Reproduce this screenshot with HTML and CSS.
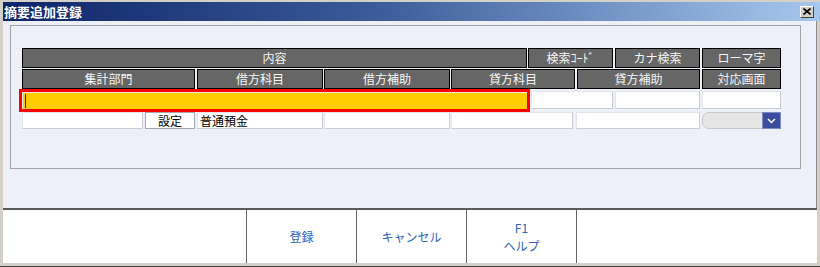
FILE: index.html
```html
<!DOCTYPE html>
<html lang="ja">
<head>
  <meta charset="UTF-8">
  <title>摘要追加登録</title>
  <link rel="stylesheet" href="styles.css">
</head>
<body>
  <div class="window">
    <div class="titlebar">
      <span class="title">摘要追加登録</span>
      <span class="close">
        <svg width="8" height="7" viewBox="0 0 8 7">
          <path d="M0.5 0.5 L7.5 6.5 M7.5 0.5 L0.5 6.5" stroke="#000" stroke-width="1.6"/>
        </svg>
      </span>
    </div>

    <div class="client">
      <div class="panel">
        <div class="row head">
          <div class="hcell w505">内容</div>
          <div class="hcell w85 g1">検索ｺｰﾄﾞ</div>
          <div class="hcell w85 g2">カナ検索</div>
          <div class="hcell w79 g2">ローマ字</div>
        </div>
        <div class="row head second">
          <div class="hcell w173">集計部門</div>
          <div class="hcell w126 g2">借方科目</div>
          <div class="hcell w126 g1">借方補助</div>
          <div class="hcell w124 g1">貸方科目</div>
          <div class="hcell w123 g2">貸方補助</div>
          <div class="hcell w79 g2">対応画面</div>
        </div>
        <div class="row input-row">
          <div class="active w505"><span class="caret"></span></div>
          <div class="cell w82 g4"></div>
          <div class="cell w85 g2"></div>
          <div class="cell w79 g2"></div>
        </div>
        <div class="row data-row">
          <div class="cell w121"></div>
          <div class="btn w50 g2">設定</div>
          <div class="cell w126 g2">普通預金</div>
          <div class="cell w126 g1"></div>
          <div class="cell w122 g1"></div>
          <div class="cell w124 g3"></div>
          <div class="combo w79 g2">
            <span class="combo-arrow">
              <svg width="9" height="6" viewBox="0 0 9 6">
                <path d="M1 1 L4.5 4.5 L8 1" fill="none" stroke="#fff" stroke-width="1.5"/>
              </svg>
            </span>
          </div>
        </div>
      </div>
    </div>

    <div class="footer">
      <div class="fspace"></div>
      <div class="fbtn">登録</div>
      <div class="fbtn">キャンセル</div>
      <div class="fbtn">F1<br>ヘルプ</div>
      <div class="fbtn rest"></div>
    </div>
  </div>
</body>
</html>
```

FILE: styles.css
```css
* {
  margin: 0;
  padding: 0;
  box-sizing: border-box;
}
body {
  width: 820px;
  height: 267px;
  background: #d4d0c8;
  font-family: "Noto Sans CJK JP", "DejaVu Sans", sans-serif;
  font-size: 12px;
  overflow: hidden;
}
.window {
  height: 267px;
  padding-top: 2px;
  border-bottom: 1px solid #404040;
}
.titlebar {
  height: 19px;
  margin-left: 3px;
  display: flex;
  align-items: center;
  justify-content: space-between;
  background: linear-gradient(to right, #0c2468, #3a5a98 45%, #a6c8ee);
}
.title {
  color: #fff;
  font-weight: bold;
  font-size: 13px;
  padding-left: 1px;
  letter-spacing: 0;
}
.close {
  width: 14px;
  height: 12px;
  margin-right: 6px;
  background: #d4d0c8;
  border-top: 1px solid #fff;
  border-left: 1px solid #fff;
  border-right: 1px solid #404040;
  border-bottom: 1px solid #404040;
  display: flex;
  align-items: center;
  justify-content: center;
}
.client {
  height: 187px;
  margin: 0 3px 0 3px;
  background: #edf0f8;
  border-right: 1px solid #8a8a8a;
  padding: 4px 0 0 7px;
}
.panel {
  width: 791px;
  height: 144px;
  border: 1px solid #a4a4a4;
  padding: 22px 0 0 11px;
}
.row {
  display: flex;
}
.head {
  height: 20px;
}
.second {
  margin-top: 1px;
}
.hcell {
  height: 20px;
  background: #666;
  border: 1px solid #000;
  color: #f6f6f6;
  display: flex;
  align-items: center;
  justify-content: center;
  line-height: 1;
}
.input-row {
  height: 18px;
  margin-top: 2px;
}
.active {
  height: 17px;
  margin-top: 1px;
  background: #ffcc00;
  outline: 3px solid #ff0000;
  border-left: 1px solid #e8e8e8;
  border-top: 1px solid #e8e8e8;
  padding: 1px 0 0 2px;
}
.caret {
  display: block;
  width: 1px;
  height: 14px;
  background: #3a3000;
}
.cell {
  background: #fff;
  border-top: 1px solid #e2e5ec;
  border-left: 1px solid #e2e5ec;
  border-right: 1px solid #c9ccd4;
  border-bottom: 1px solid #c9ccd4;
  color: #000;
  padding-left: 2px;
  line-height: 15px;
}
.data-row {
  height: 17px;
  margin-top: 3px;
}
.btn {
  background: #fff;
  border: 1px solid #a8a8a8;
  display: flex;
  align-items: center;
  justify-content: center;
  color: #000;
}
.combo {
  background: #e6e6e6;
  border: 1px solid #c6c6c6;
  border-radius: 7px 0 0 7px;
  display: flex;
  justify-content: flex-end;
}
.combo-arrow {
  width: 19px;
  margin: -1px -1px -1px 0;
  background: #3c4da0;
  border: 1px solid #7b8ac0;
  display: flex;
  align-items: center;
  justify-content: center;
}
.w505 { width: 505px; }
.w173 { width: 173px; }
.w126 { width: 126px; }
.w124 { width: 124px; }
.w123 { width: 123px; }
.w122 { width: 122px; }
.w121 { width: 121px; }
.w85 { width: 85px; }
.w82 { width: 82px; }
.w79 { width: 79px; }
.w50 { width: 50px; }
.g1 { margin-left: 1px; }
.g2 { margin-left: 2px; }
.g3 { margin-left: 3px; }
.g4 { margin-left: 4px; }
.footer {
  height: 55px;
  margin: 0 3px 0 3px;
  background: #fff;
  border-top: 2px solid #5a5a5a;
  display: flex;
}
.fspace {
  width: 243px;
}
.fbtn {
  width: 110px;
  border-left: 1px solid #666;
  color: #2b63b8;
  display: flex;
  align-items: center;
  justify-content: center;
  text-align: center;
  line-height: 18px;
}
.rest {
  flex: 1;
}
```
